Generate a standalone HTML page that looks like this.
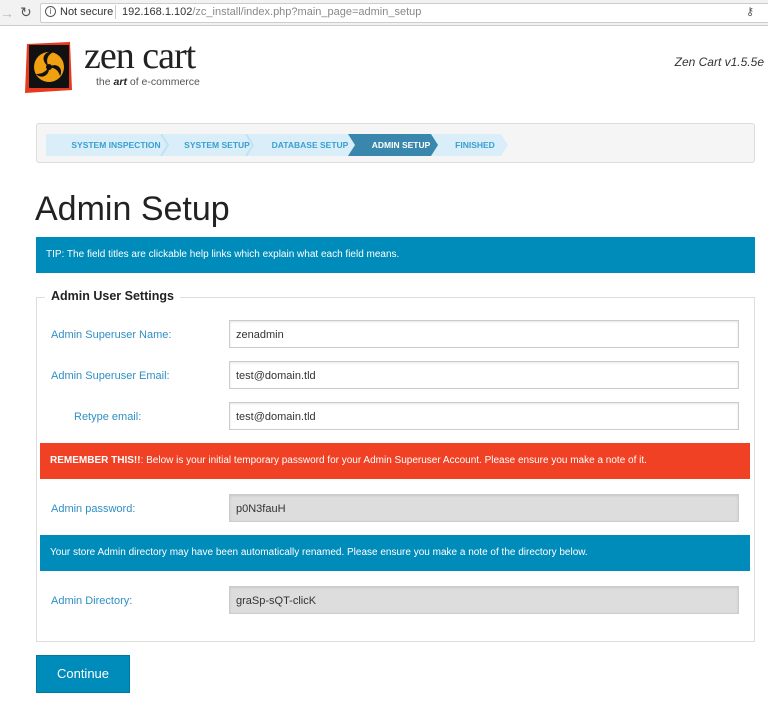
<!DOCTYPE html>
<html><head><style>
*{box-sizing:border-box}
body{margin:0;width:768px;height:701px;background:#fff;font-family:"Liberation Sans",Arial,sans-serif;position:relative;overflow:hidden}
.a{position:absolute}
.lbl{position:absolute;left:51px;font-size:11px;color:#2f8fc4}
.inp{position:absolute;left:229px;width:510px;height:28px;border:1px solid #ccc;background:#fff;font-size:11px;color:#333;padding:8px 6px;box-shadow:inset 0 1px 2px rgba(0,0,0,.1)}
.inp.g{background:#ddd}
.bar{position:absolute;color:#fff;font-size:10px;padding-left:10px;line-height:36px;height:36px;white-space:nowrap}
.crumb{position:absolute;top:134px;height:22px;font-size:8.5px;font-weight:bold;line-height:22px;color:#3a9fd0;text-align:center}
</style></head><body>
<div class="a" style="left:0;top:0;width:768px;height:26px;background:#f2f2f2;border-bottom:1px solid #ccc"></div>
<div class="a" style="left:0;top:5px;font-size:14px;color:#bbb">→</div>
<div class="a" style="left:20px;top:4px;font-size:14px;color:#555">↻</div>
<div class="a" style="left:40px;top:3px;width:740px;height:20px;background:#fff;border:1px solid #ccc;border-radius:2px"></div>
<div class="a" style="left:45px;top:6px;width:11px;height:11px;border:1px solid #555;border-radius:50%;font-size:8px;line-height:9px;text-align:center;color:#555">i</div>
<div class="a" style="left:60px;top:6px;font-size:11px;color:#333">Not secure</div>
<div class="a" style="left:115px;top:5px;width:1px;height:14px;background:#ccc"></div>
<div class="a" style="left:122px;top:6px;font-size:11px;color:#333">192.168.1.102<span style="color:#888">/zc_install/index.php?main_page=admin_setup</span></div>
<div class="a" style="left:746px;top:5px;font-size:11px;color:#555">⚷</div>

<svg class="a" style="left:24px;top:40px" width="50" height="55" viewBox="0 0 50 55">
<polygon points="3,4 46,2 48,50 1,53" fill="#e53a1e"/>
<rect x="5" y="5" width="40" height="43" fill="#111"/>
<circle cx="25" cy="27" r="15" fill="#f0a010"/>
<path d="M25 27 C15 20 20 10 30 12 C22 15 22 22 25 27Z M25 27 C32 22 40 28 36 36 C34 29 30 28 25 27Z M25 27 C26 35 18 40 12 34 C19 34 22 31 25 27Z" fill="#111"/>
<circle cx="25" cy="27" r="3" fill="#111"/>
</svg>
<div class="a" style="left:84px;top:34px;font-family:'Liberation Serif',serif;font-size:38px;color:#222;letter-spacing:-1px">zen cart</div>
<div class="a" style="left:96px;top:76px;font-size:10.5px;color:#555">the <i style="font-weight:bold;color:#222">art</i> of e-commerce</div>
<div class="a" style="right:4px;top:55px;font-size:12px;font-style:italic;color:#333">Zen Cart v1.5.5e</div>

<div class="a" style="left:36px;top:123px;width:719px;height:40px;background:#f5f5f5;border:1px solid #ddd;border-radius:3px"></div>
<svg class="a" style="left:46px;top:134px" width="462" height="22">
<polygon points="0,0 455,0 462,11 455,22 0,22" fill="#d9eef8"/>
<polygon points="302,0 385,0 392,11 385,22 302,22 309,11" fill="#3987ad"/>
<polyline points="115,0 122,11 115,22" fill="none" stroke="#bfe3f3" stroke-width="2"/>
<polyline points="200,0 207,11 200,22" fill="none" stroke="#bfe3f3" stroke-width="2"/>
</svg>
<div class="crumb" style="left:64px;width:104px">SYSTEM INSPECTION</div>
<div class="crumb" style="left:176px;width:82px">SYSTEM SETUP</div>
<div class="crumb" style="left:266px;width:88px">DATABASE SETUP</div>
<div class="crumb" style="left:364px;width:74px;color:#fff">ADMIN SETUP</div>
<div class="crumb" style="left:446px;width:58px">FINISHED</div>

<div class="a" style="left:35px;top:190px;font-size:34px;color:#222">Admin Setup</div>
<div class="bar" style="left:36px;top:237px;width:719px;background:#008cba">TIP: The field titles are clickable help links which explain what each field means.</div>

<div class="a" style="left:36px;top:297px;width:719px;height:345px;border:1px solid #ddd"></div>
<div class="a" style="left:45px;top:289px;padding:0 6px;background:#fff;font-size:12.5px;font-weight:bold;color:#222">Admin User Settings</div>

<div class="lbl" style="top:329px">Admin Superuser Name:</div>
<div class="inp" style="top:320px">zenadmin</div>
<div class="lbl" style="top:370px">Admin Superuser Email:</div>
<div class="inp" style="top:361px">test@domain.tld</div>
<div class="lbl" style="top:411px;left:74px">Retype email:</div>
<div class="inp" style="top:402px">test@domain.tld</div>

<div class="bar" style="left:40px;top:443px;width:710px;background:#f04124"><b>REMEMBER THIS!!</b>: Below is your initial temporary password for your Admin Superuser Account. Please ensure you make a note of it.</div>
<div class="lbl" style="top:503px">Admin password:</div>
<div class="inp g" style="top:494px">p0N3fauH</div>
<div class="bar" style="left:40px;top:535px;width:710px;background:#008cba">Your store Admin directory may have been automatically renamed. Please ensure you make a note of the directory below.</div>
<div class="lbl" style="top:595px">Admin Directory:</div>
<div class="inp g" style="top:586px">graSp-sQT-clicK</div>

<div class="a" style="left:36px;top:655px;width:94px;height:38px;background:#008cba;border:1px solid #0078a0;color:#fff;font-size:13px;text-align:center;line-height:36px">Continue</div>
</body></html>
